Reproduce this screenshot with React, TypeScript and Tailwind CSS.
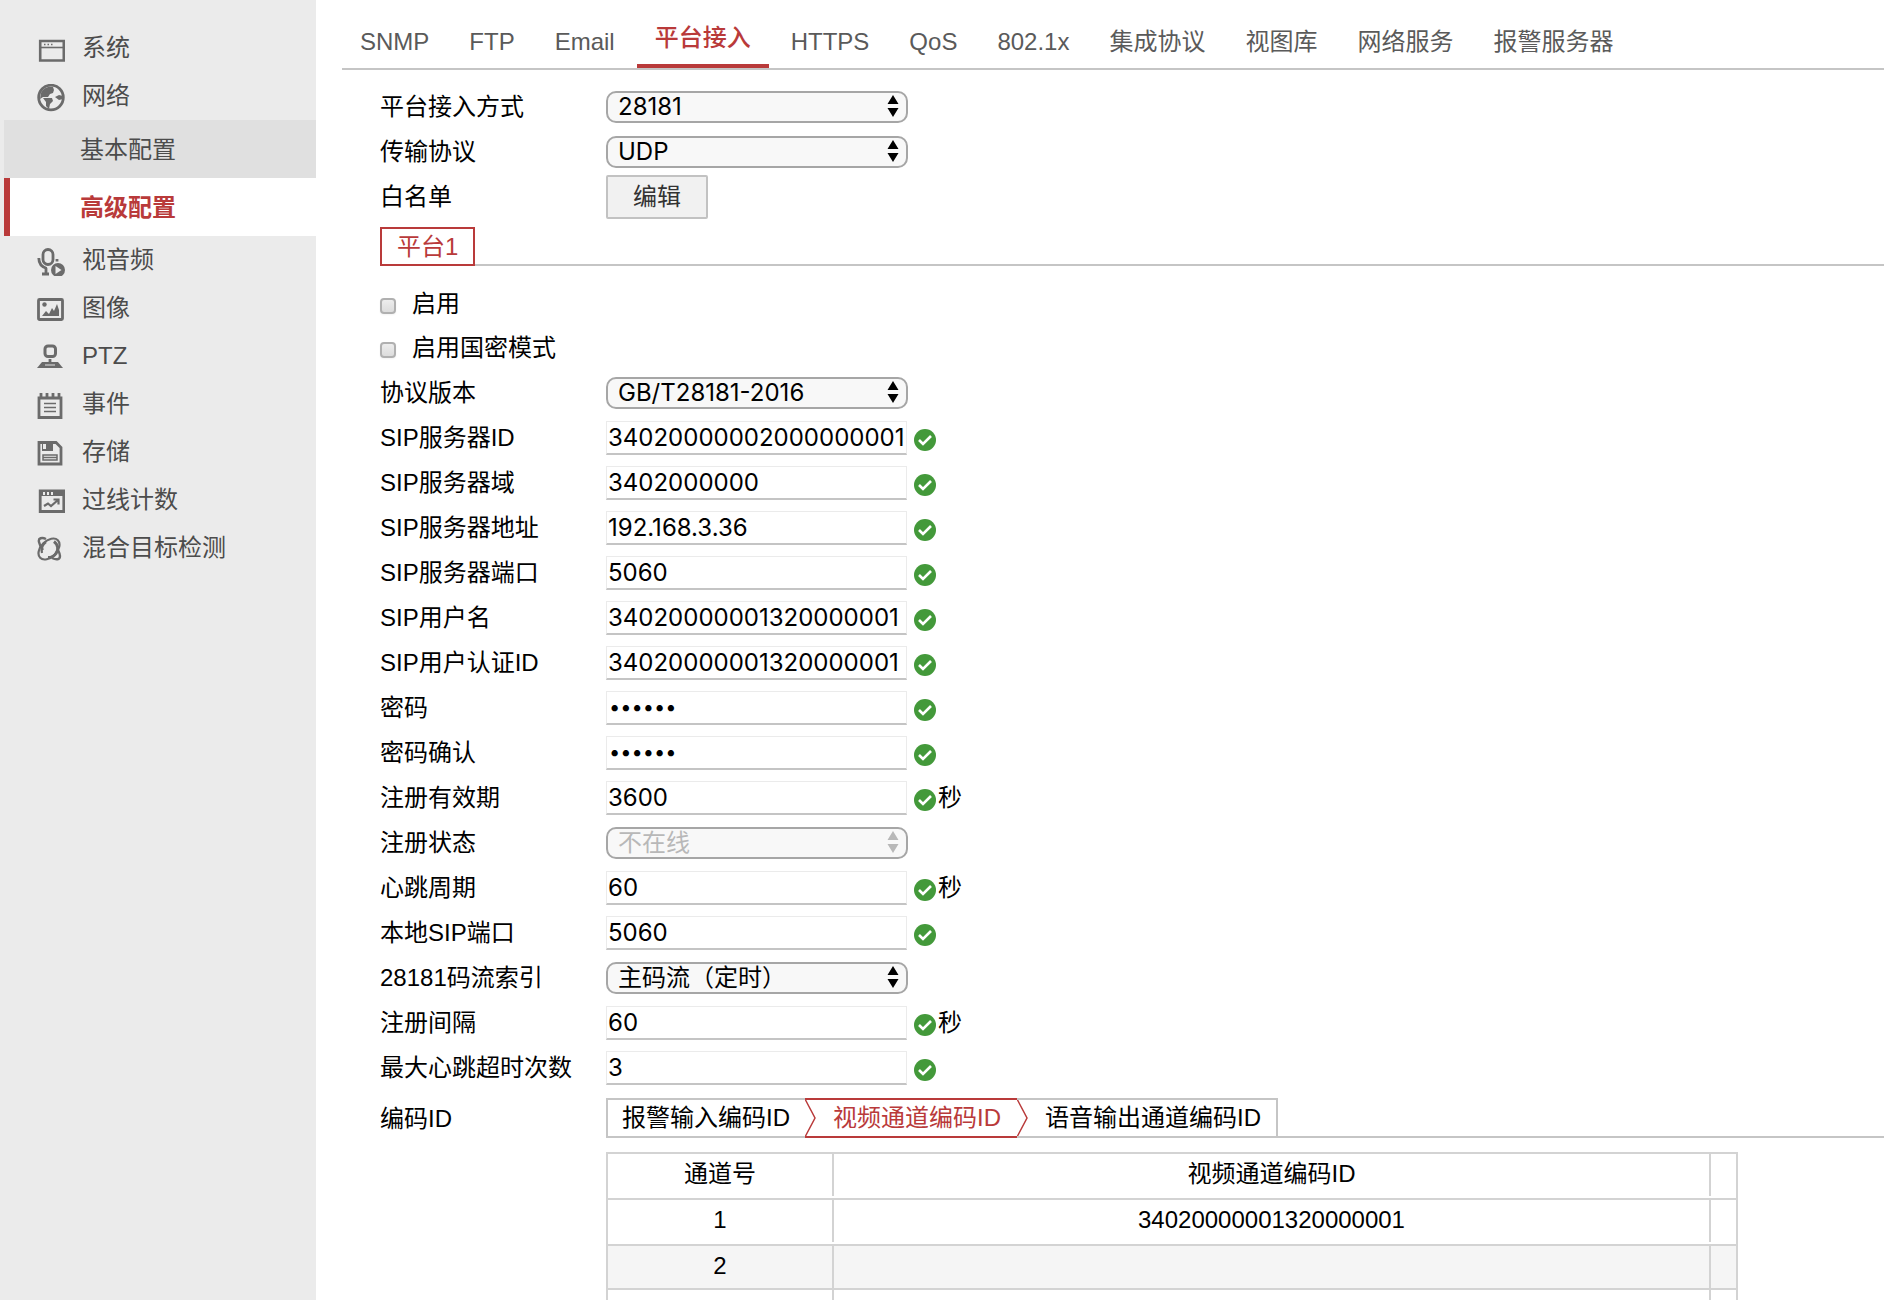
import { ReactNode, useState } from "react";
import clsx from "clsx";

type Field = {
  id: string;
  label: string;
  type: "text" | "password" | "select";
  value: string;
  unit?: string;
  disabled?: boolean;
};

const fields: Field[] = [
  { id: "version", label: "协议版本", type: "select", value: "GB/T28181-2016" },
  { id: "serverId", label: "SIP服务器ID", type: "text", value: "34020000002000000001" },
  { id: "serverDomain", label: "SIP服务器域", type: "text", value: "3402000000" },
  { id: "serverAddr", label: "SIP服务器地址", type: "text", value: "192.168.3.36" },
  { id: "serverPort", label: "SIP服务器端口", type: "text", value: "5060" },
  { id: "userName", label: "SIP用户名", type: "text", value: "34020000001320000001" },
  { id: "authId", label: "SIP用户认证ID", type: "text", value: "34020000001320000001" },
  { id: "password", label: "密码", type: "password", value: "123456" },
  { id: "confirm", label: "密码确认", type: "password", value: "123456" },
  { id: "expires", label: "注册有效期", type: "text", value: "3600", unit: "秒" },
  { id: "status", label: "注册状态", type: "select", value: "不在线", disabled: true },
  { id: "heartbeat", label: "心跳周期", type: "text", value: "60", unit: "秒" },
  { id: "localPort", label: "本地SIP端口", type: "text", value: "5060" },
  { id: "stream", label: "28181码流索引", type: "select", value: "主码流（定时）" },
  { id: "interval", label: "注册间隔", type: "text", value: "60", unit: "秒" },
  { id: "maxTimeout", label: "最大心跳超时次数", type: "text", value: "3" },
];

const tabs = [
  "SNMP",
  "FTP",
  "Email",
  "平台接入",
  "HTTPS",
  "QoS",
  "802.1x",
  "集成协议",
  "视图库",
  "网络服务",
  "报警服务器",
];

const channels = [
  { no: "1", code: "34020000001320000001" },
  { no: "2", code: "" },
  { no: "", code: "" },
];

/**
 * 侧边栏图标 (28x28)
 */
const icons: Record<string, ReactNode> = {
  系统: (
    <>
      <path d="M3.200 5h23.600v19.500H3.200z" strokeWidth="2.600" />
      <path d="M3 11.500h24" strokeWidth="1.600" />
      <path d="M7 8.500h1.500M10.500 8.500h1.500M14 8.500h1.500" strokeWidth="1.500" />
    </>
  ),
  网络: (
    <>
      <circle cx="14" cy="13.500" r="12.300" strokeWidth="2.800" />
      <path
        d="M4 9c2-4 6-7 12-6l1 3-1 3-3 1-2 3H6l-3 2zM6 14h9l1 3-3 3-1 5-3-3v-4zM18 13l4-2 4 1v3l-4 1z"
        fill="currentColor"
        stroke="none"
      />
    </>
  ),
  视音频: (
    <>
      <rect x="6" y="1.500" width="10" height="15" rx="5" strokeWidth="2.800" />
      <path d="M1.800 10c0 6 3 9 8 10.500M20 11v2.500M5 26h7M9 20v6" strokeWidth="2.800" />
      <circle cx="21" cy="22" r="7" fill="currentColor" stroke="none" />
      <path d="M18.500 18v8l6-4z" fill="#ebebeb" stroke="none" />
    </>
  ),
  图像: (
    <>
      <rect x="1.500" y="3.500" width="24" height="20" rx="1" strokeWidth="2.800" />
      <circle cx="7.500" cy="8.500" r="2.200" fill="currentColor" stroke="none" />
      <path d="M5 20l4-5 3 3 3-6 2 3 3-7 2 6v6z" fill="currentColor" stroke="none" />
    </>
  ),
  PTZ: (
    <>
      <rect x="8" y="2" width="10.500" height="10.500" rx="3" strokeWidth="3" />
      <path d="M13 15v4" strokeWidth="2.800" />
      <path d="M5 18h16l5 6H0z" fill="currentColor" stroke="none" />
      <path d="M8 21h10" stroke="#bdbdbd" strokeWidth="1.500" />
    </>
  ),
  事件: (
    <>
      <path d="M2 6h22v19.500H2z" strokeWidth="2.800" />
      <path d="M4 1v4M10 1v4M16 1v4M22 1v4" strokeWidth="2.800" />
      <path d="M7 11.500h12M7 15.500h12M7 19.500h12" strokeWidth="1.500" />
    </>
  ),
  存储: (
    <>
      <path d="M2 2.500h17l5 5v16.500H2z" strokeWidth="2.800" />
      <path d="M5 2h11v9H5z" fill="currentColor" stroke="none" />
      <path d="M6 4h3v5H6z" fill="#ebebeb" stroke="none" />
      <path d="M6 15h14v5H6zM6 17.500h14" strokeWidth="1.500" />
    </>
  ),
  过线计数: (
    <>
      <path d="M3.200 3h23.600v20.500H3.200z" strokeWidth="2.800" />
      <path d="M3 2h24v6H3z" fill="currentColor" stroke="none" />
      <path d="M6 5.500h2M10 5.500h2M14 5.500h2" stroke="#ebebeb" strokeWidth="3" />
      <path d="M7 18l4-2.500 3 2.500 7-6M16.500 11.500h5v5" strokeWidth="2.200" />
    </>
  ),
  混合目标检测: (
    <>
      <ellipse cx="12" cy="13" rx="12.500" ry="8" transform="rotate(-45 12 13)" strokeWidth="2.200" />
      <path
        d="M9 3C5 1 1 2 2 6c.5 3 2 5 4 8M15 22c4 2 8 2 8-2 0-2-1-4-2-6"
        strokeWidth="2.400"
      />
      <path d="M17 5.500c4 3 5 8 2 12-2 3-5 4-8 4" strokeWidth="3" />
      <path d="M5 17c-1-4 0-8 4-11" strokeWidth="2.200" />
    </>
  ),
};

function MenuItem({ name }: { name: string }) {
  return (
    <a href="#" className="flex h-12 items-center pl-[37px]">
      <svg
        viewBox="0 0 28 28"
        className="mt-1 mr-[17px] size-7"
        fill="none"
        stroke="currentColor"
        color="#6b6b6b"
      >
        {icons[name]}
      </svg>
      {name}
    </a>
  );
}

function Sidebar() {
  return (
    <nav className="w-[316px] shrink-0 bg-[#ebebeb] pt-6 text-[#4c4c4c]">
      <MenuItem name="系统" />
      <MenuItem name="网络" />
      <a href="#" className="ml-1 flex h-[58px] items-center bg-[#e0e0e0] pt-[2px] pl-[76px]">
        基本配置
      </a>
      <a
        href="#"
        className="ml-1 flex h-[58px] items-center border-l-[6px] border-[#b93a3a] bg-white pt-[2px] pl-[70px] font-bold text-[#b93a3a]"
      >
        高级配置
      </a>
      {["视音频", "图像", "PTZ", "事件", "存储", "过线计数", "混合目标检测"].map((name) => (
        <MenuItem key={name} name={name} />
      ))}
    </nav>
  );
}

function Select({ id, value, disabled }: { id: string; value: string; disabled?: boolean }) {
  return (
    <div className={clsx("relative w-[302px]", disabled ? "text-[#b8b8b8]" : "text-black")}>
      <select
        id={id}
        disabled={disabled}
        className="block h-8 w-full appearance-none rounded-[10px] border-2 border-[#a6a6a6] bg-[#f8f8f8] pl-[10px] font-[Inter,'Noto_Sans_CJK_SC',sans-serif] leading-7"
      >
        <option>{value}</option>
      </select>
      <svg
        viewBox="0 0 12 22"
        className="pointer-events-none absolute top-1 right-[9px] h-[22px] w-3"
        fill="currentColor"
      >
        <path d="M6 0l5.500 9h-11zM6 22l5.500-9h-11z" />
      </svg>
    </div>
  );
}

function Check() {
  return (
    <svg viewBox="0 0 22 22" className="mt-1 ml-[7px] size-[22px]">
      <circle cx="11" cy="11" r="11" fill="#43993a" />
      <path d="M5 11l4 4 8-8" fill="none" stroke="#fff" strokeWidth="2.600" />
    </svg>
  );
}

function Row({ id, label, children }: { id: string; label: string; children: ReactNode }) {
  return (
    <div className="flex h-[45px] items-center">
      <label htmlFor={id} className="w-[226px] shrink-0">
        {label}
      </label>
      {children}
    </div>
  );
}

function FieldRow({ field }: { field: Field }) {
  const [value, setValue] = useState(field.value);
  return (
    <Row id={field.id} label={field.label}>
      {field.type === "select" ? (
        <Select id={field.id} value={field.value} disabled={field.disabled} />
      ) : (
        <>
          <input
            id={field.id}
            type={field.type}
            value={value}
            onChange={(e) => setValue(e.currentTarget.value)}
            className={clsx(
              "h-[34px] w-[301px] border border-b-2 border-[#ebebeb] border-b-[#c4c4c4] bg-white font-[Inter,sans-serif]",
              field.type === "password" ? "pl-[2px] text-xl" : "pl-px"
            )}
          />
          <Check />
          {field.unit && <span className="ml-[2px]">{field.unit}</span>}
        </>
      )}
    </Row>
  );
}

function Checkbox({ label }: { label: string }) {
  return (
    <label className="flex h-11 items-center">
      <input
        type="checkbox"
        className="mt-1 mr-4 size-4 appearance-none rounded-[4px] border-2 border-[#b0b0b0] bg-linear-to-b from-[#ededed] to-[#dcdcdc] shadow-xs"
      />
      {label}
    </label>
  );
}

function Chevron() {
  return (
    <svg viewBox="0 0 12 40" className="h-10 w-3" fill="none" stroke="#b93a3a">
      <path d="M0 1l10 19L0 39" strokeWidth="1.500" />
    </svg>
  );
}

function CodeTabs() {
  return (
    <div className="flex h-10 grow">
      <button className="border-2 border-r-0 border-[#c5c5c5] pr-[15px] pl-[14px]">
        报警输入编码ID
      </button>
      <div className="flex text-[#b93a3a]">
        <Chevron />
        <button className="-ml-3 border-y-2 border-[#b93a3a] pr-4 pl-7">视频通道编码ID</button>
      </div>
      <div className="flex">
        <Chevron />
        <button className="-ml-3 border-2 border-l-0 border-[#c5c5c5] pr-[15px] pl-7">
          语音输出通道编码ID
        </button>
      </div>
      <div className="grow border-b-2 border-[#c5c5c5]" />
    </div>
  );
}

function ChannelTable() {
  const cell = "h-[42px] border-r-2 border-[#d3d3d3] leading-10";
  return (
    <table className="w-full max-w-[1132px] table-fixed border-collapse border-2 border-[#d3d3d3] text-center">
      <colgroup>
        <col className="w-[227px]" />
        <col />
        <col className="w-[26px]" />
      </colgroup>
      <thead>
        <tr className="border-b-2 border-[#d3d3d3]">
          <th className="p-0 pb-[2px] font-normal">
            <div className={cell}>通道号</div>
          </th>
          <th className="p-0 pb-[2px] font-normal">
            <div className={cell}>视频通道编码ID</div>
          </th>
          <th />
        </tr>
      </thead>
      <tbody>
        {channels.map(({ no, code }, idx) => (
          <tr key={idx} className="border-b-2 border-[#d3d3d3] even:bg-[#f5f5f5]">
            {[no, code].map((text, col) => (
              <td key={col} className={clsx("p-0", idx % 2 === 0 && "pb-[2px]")}>
                <div className={cell}>{text}</div>
              </td>
            ))}
            <td />
          </tr>
        ))}
      </tbody>
    </table>
  );
}

function App() {
  return (
    <div className="flex h-screen overflow-hidden bg-white font-['Liberation_Sans','Noto_Sans_CJK_SC',sans-serif] text-2xl leading-8 text-black">
      <Sidebar />
      <main className="min-w-0 grow pl-[26px]">
        <div className="flex h-[70px] gap-1 border-b-2 border-[#c5c5c5] text-[#5a5a5a]">
          {tabs.map((tab) => (
            <a
              key={tab}
              href="#"
              className={clsx(
                "px-[18px]",
                tab === "平台接入"
                  ? "border-b-4 border-[#b93a3a] pt-[22px] font-medium text-[#b93a3a]"
                  : "pt-[26px]"
              )}
            >
              {tab}
            </a>
          ))}
        </div>

        <div className="pt-[14px] pl-[38px]">
          <Row id="mode" label="平台接入方式">
            <Select id="mode" value="28181" />
          </Row>
          <Row id="protocol" label="传输协议">
            <Select id="protocol" value="UDP" />
          </Row>
          <Row id="whitelist" label="白名单">
            <button
              id="whitelist"
              className="h-11 rounded-[2px] border-2 border-[#c2c2c2] bg-[#f1f1f1] px-[25px] text-[#333]"
            >
              编辑
            </button>
          </Row>

          <div className="mt-2 flex h-[39px]">
            <button className="border-2 border-[#b93a3a] px-[15px] text-[#b93a3a]">平台1</button>
            <div className="grow border-b-2 border-[#c5c5c5]" />
          </div>

          <div className="pt-4">
            <Checkbox label="启用" />
            <Checkbox label="启用国密模式" />
            {fields.map((field) => (
              <FieldRow key={field.id} field={field} />
            ))}
          </div>

          <div className="flex pt-2">
            <div className="w-[226px] shrink-0 pt-[5px]">编码ID</div>
            <div className="min-w-0 grow">
              <CodeTabs />
              <div className="pt-[14px]">
                <ChannelTable />
              </div>
            </div>
          </div>
        </div>
      </main>
    </div>
  );
}

export default App;
